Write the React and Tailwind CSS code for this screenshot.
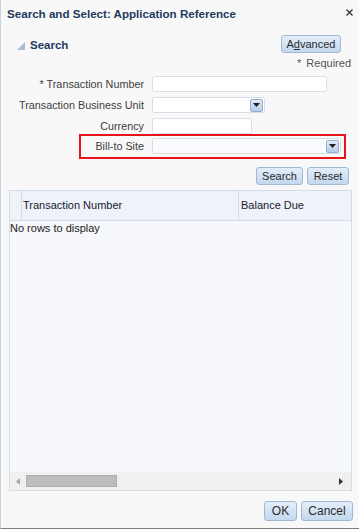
import React from 'react'

const font = { fontFamily: '"Liberation Sans", Arial, sans-serif' }

function Btn({ children, className = '' }) {
  return (
    <button
      className={`flex items-center justify-center rounded-[3px] border border-[#9fb8d4] bg-gradient-to-b from-[#e4eef9] to-[#c3d8ee] text-[11px] text-[#2b2b2b] ${className}`}
    >
      {children}
    </button>
  )
}

function DropBtn() {
  return (
    <span className="flex h-[13px] w-[13px] items-center justify-center rounded-[2px] border border-[#93afcf] bg-gradient-to-b from-[#e0ebf7] to-[#b6cde8]">
      <svg width="7" height="4" viewBox="0 0 7 4">
        <polygon points="0,0 7,0 3.5,4" fill="#1e1e1e" />
      </svg>
    </span>
  )
}

function Label({ children, className = 'w-[143px]' }) {
  return (
    <span className={`${className} shrink-0 text-right text-[10.8px] text-[#3d3d3d]`}>
      {children}
    </span>
  )
}

export default function App() {
  return (
    <div
      style={font}
      className="flex h-[529px] w-[359px] flex-col border-b border-l border-b-[#7f7f7f] border-l-[#c6d5e6] bg-[#f8f8f8]"
    >
      {/* title bar */}
      <div className="flex h-[28px] shrink-0 items-center justify-between pl-[6px] pr-[6px]">
        <span className="text-[11.6px] font-bold text-[#1e3a5e]">
          Search and Select: Application Reference
        </span>
        <svg width="7" height="7" viewBox="0 0 7 7" className="mt-[-4px]">
          <path d="M0.5 0.5 L6.5 6.5 M6.5 0.5 L0.5 6.5" stroke="#333" strokeWidth="1.3" />
        </svg>
      </div>

      {/* search header */}
      <div className="mt-[7px] flex h-[18px] shrink-0 items-center justify-between pl-[16px] pr-[18px]">
        <div className="mt-[3px] flex items-center gap-[5px]">
          <svg width="8" height="8" viewBox="0 0 8 8" className="mt-[1px]">
            <polygon points="8,0 8,8 0,8" fill="#a9bdd3" />
          </svg>
          <span className="text-[11.5px] font-bold text-[#1e3a5e]">Search</span>
        </div>
        <Btn className="h-[18px] w-[60px]">
          A<span className="underline">d</span>vanced
        </Btn>
      </div>

      <div className="mt-[3px] flex h-[14px] shrink-0 items-center justify-end pr-[8px] text-[11px] text-[#555]">
        <span className="mr-[5px]">*</span>
        <span>Required</span>
      </div>

      {/* form */}
      <div className="mt-[6px] flex shrink-0 flex-col gap-[5px]">
        <div className="flex h-[16px] items-center gap-[8px]">
          <Label>* Transaction Number</Label>
          <span className="h-[16px] w-[175px] rounded-[2px] border border-[#d8dee6] bg-white" />
        </div>
        <div className="flex h-[16px] items-center gap-[8px]">
          <Label>Transaction Business Unit</Label>
          <span className="flex h-[16px] w-[113px] items-center justify-end rounded-[2px] border border-[#d8dee6] bg-white pr-[1px]">
            <DropBtn />
          </span>
        </div>
        <div className="flex h-[16px] items-center gap-[8px]">
          <Label>Currency</Label>
          <span className="h-[16px] w-[100px] rounded-[2px] border border-[#d8dee6] bg-white" />
        </div>
      </div>

      <div className="ml-[78px] flex h-[25px] w-[267px] shrink-0 items-start border-2 border-[#e8141a] pt-[2px]">
        <div className="flex h-[16px] items-center gap-[8px]">
          <Label className="w-[63px]">Bill-to Site</Label>
          <span className="flex h-[16px] w-[189px] items-center justify-end rounded-[2px] border border-[#d8dee6] bg-[#f9fbfe] pr-[1px]">
            <DropBtn />
          </span>
        </div>
      </div>

      <div className="mt-[8px] flex h-[17px] shrink-0 justify-end gap-[4px] pr-[10px]">
        <Btn className="h-[18px] w-[47px]">Search</Btn>
        <Btn className="h-[18px] w-[42px]">Reset</Btn>
      </div>

      {/* table */}
      <div className="ml-[8px] mt-[6px] flex h-[301px] w-[343px] shrink-0 flex-col border border-[#d4dce7] bg-[#f6f8fb]">
        <div className="flex h-[30px] shrink-0 border-b border-[#d4dce7] bg-[#eef2f9] text-[11px] text-[#1a1a2e]">
          <span className="w-[12px] shrink-0 border-r border-[#d4dce7]" />
          <span className="flex w-[217px] shrink-0 items-center border-r border-[#d4dce7] pl-[1px]">
            Transaction Number
          </span>
          <span className="flex items-center pl-[2px]">Balance Due</span>
        </div>
        <div className="flex-1 text-[11px] leading-[14px] text-[#222]">No rows to display</div>
        <div className="flex h-[18px] shrink-0 items-center bg-[#f0f0f0] pl-[6px] pr-[8px]">
          <svg width="4" height="7" viewBox="0 0 4 7">
            <polygon points="4,0 4,7 0,3.5" fill="#a8a8a8" />
          </svg>
          <span className="ml-[6px] h-[12px] w-[91px] border border-[#adadad] bg-[#bdbdbd]" />
          <span className="flex-1" />
          <svg width="4" height="7" viewBox="0 0 4 7">
            <polygon points="0,0 0,7 4,3.5" fill="#333" />
          </svg>
        </div>
      </div>

      <div className="mt-[10px] flex shrink-0 justify-end gap-[4px] pr-[6px]">
        <Btn className="h-[20px] w-[33px] text-[12px]">OK</Btn>
        <Btn className="h-[20px] w-[52px] text-[12px]">Cancel</Btn>
      </div>
    </div>
  )
}
